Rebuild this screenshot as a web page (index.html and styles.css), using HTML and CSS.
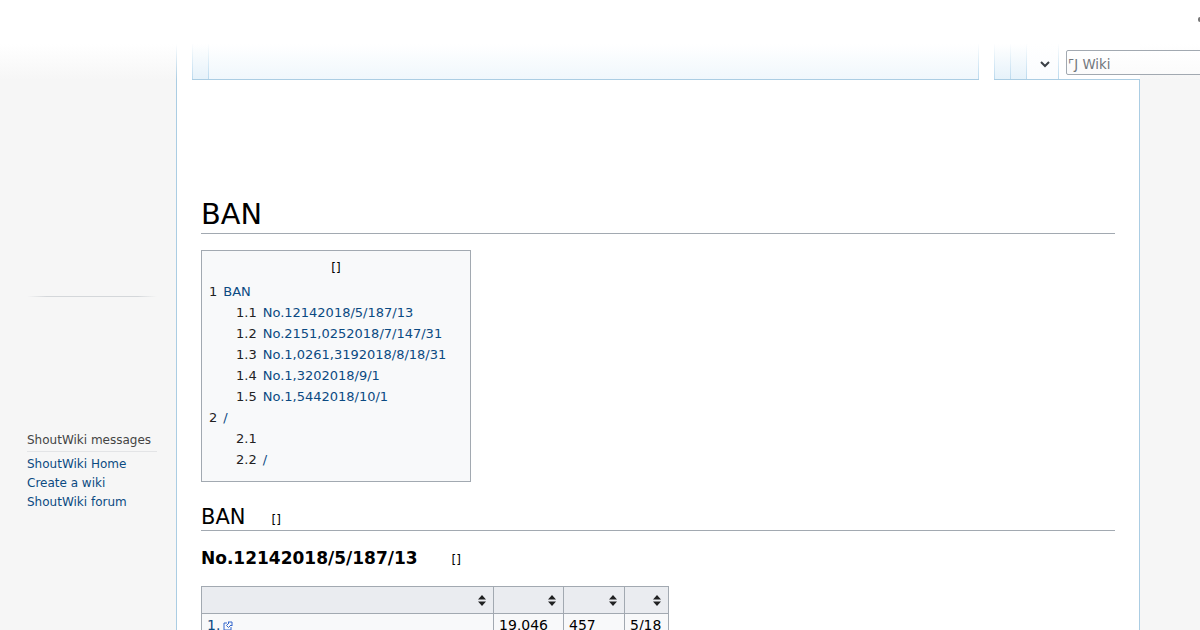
FILE: index.html
```html
<!DOCTYPE html>
<html lang="en">
<head>
<meta charset="utf-8">
<title>BAN</title>
<link rel="stylesheet" href="styles.css">
</head>
<body>
<div class="page">
  <span class="corner-mark"></span>
  <aside class="sidebar">
    <div class="side-rule"></div>
    <div class="portal">
      <h3 class="portal-title">ShoutWiki messages</h3>
      <ul class="portal-list">
        <li><a href="#">ShoutWiki Home</a></li>
        <li><a href="#">Create a wiki</a></li>
        <li><a href="#">ShoutWiki forum</a></li>
      </ul>
    </div>
  </aside>
  <div class="main">
    <header class="head">
      <div class="tabs tabs-left"><span class="tab tab-narrow"></span><span class="tab tab-fill"></span></div>
      <div class="tabs tabs-right">
        <span class="tab tab-s"></span><span class="tab tab-s"></span>
        <span class="tab tab-more">
          <svg width="10" height="7" viewBox="0 0 10 7"><path d="M1 1l4 4 4-4" fill="none" stroke="#3a3f45" stroke-width="2"/></svg>
        </span>
      </div>
      <div class="head-end"><div class="search"><span class="search-ph">⌜J Wiki</span></div></div>
    </header>
    <main class="content">
      <h1 class="title">BAN</h1>
      <div class="toc">
        <div class="toc-title">[]</div>
        <ul class="toc-list">
          <li><span class="num">1</span><a href="#">BAN</a></li>
          <li class="sub"><span class="num">1.1</span><a href="#">No.12142018/5/187/13</a></li>
          <li class="sub"><span class="num">1.2</span><a href="#">No.2151,0252018/7/147/31</a></li>
          <li class="sub"><span class="num">1.3</span><a href="#">No.1,0261,3192018/8/18/31</a></li>
          <li class="sub"><span class="num">1.4</span><a href="#">No.1,3202018/9/1</a></li>
          <li class="sub"><span class="num">1.5</span><a href="#">No.1,5442018/10/1</a></li>
          <li><span class="num">2</span><a href="#">/</a></li>
          <li class="sub"><span class="num">2.1</span></li>
          <li class="sub"><span class="num">2.2</span><a href="#">/</a></li>
        </ul>
      </div>
      <h2 class="h2">BAN<span class="edit">[]</span></h2>
      <h3 class="h3">No.12142018/5/187/13<span class="edit edit-h3">[]</span></h3>
      <table class="data">
        <thead>
          <tr><th class="c1"></th><th class="c2"></th><th class="c3"></th><th class="c4"></th></tr>
        </thead>
        <tbody>
          <tr>
            <td><a href="#">1.</a><svg class="ext" width="10" height="10" viewBox="0 0 10 10"><path d="M4 2H1v7h7V6" fill="none" stroke="#36c" stroke-width="1"/><path d="M5 1h4v4L8 4 5.500 6.500 3.500 4.500 6 2z" fill="none" stroke="#36c" stroke-width="1"/></svg></td>
            <td>19,046</td><td>457</td><td>5/18</td>
          </tr>
        </tbody>
      </table>
    </main>
  </div>
</div>
</body>
</html>
```
FILE: styles.css
```css
* { box-sizing: border-box; }
html, body { margin: 0; height: 630px; overflow: hidden; }
body {
  font-family: "DejaVu Sans", sans-serif;
  background: #f6f6f6;
  color: #000;
}
a { color: #0b4a82; text-decoration: none; }
.page {
  display: flex;
  position: relative;
  height: 630px;
  background: linear-gradient(#fff 44px, #f6f6f6 80px);
}
.corner-mark {
  position: absolute;
  left: 1198px;
  top: 17px;
  width: 2px;
  height: 5px;
  background: #777;
  border-radius: 2px 0 0 2px;
}
.sidebar { width: 176px; flex: none; padding: 296px 19px 0 27px; }
.side-rule {
  height: 1px;
  background: linear-gradient(90deg, rgba(200,204,209,0), #d4d7da 15%, #d4d7da 85%, rgba(200,204,209,0));
}
.portal { margin-top: 135px; }
.portal-title {
  margin: 0;
  font-size: 12px;
  font-weight: 400;
  line-height: 16px;
  color: #444;
  height: 20px;
  border-bottom: 1px solid #e3e4e6;
}
.portal-list { list-style: none; margin: 3px 0 0; padding: 0; }
.portal-list li { font-size: 12px; line-height: 19px; }
.main { width: 964px; flex: none; }
.head {
  height: 80px;
  padding-top: 44px;
  display: flex;
  background: linear-gradient(#fff, #fff) 0 44px / 100% 36px no-repeat;
  position: relative;
}
.head::before {
  content: "";
  position: absolute;
  left: 0;
  top: 44px;
  width: 1px;
  height: 36px;
  background: linear-gradient(#fff, #abcde3);
}
.tabs {
  height: 36px;
  flex: none;
  display: flex;
  border-bottom: 1px solid #abcde3;
}
.tabs-left {
  width: 787px;
  margin-left: 16px;
  background: linear-gradient(#fff, #f0f7fc);
}
.tabs-right {
  width: 65px;
  margin-left: 15px;
  background: linear-gradient(#fff, #e6f2fa);
}
.tab {
  display: block;
  border-left: 1px solid;
  border-image: linear-gradient(#fff, #b9d9ee) 1;
}
.tab-narrow { width: 16px; background: linear-gradient(#fff, #e6f2fa); }
.tab-fill { flex: 1; border-right: 1px solid; }
.tab-s { width: 16px; }
.tab-more {
  flex: 1;
  border-right: 1px solid;
  display: flex;
  align-items: center;
  justify-content: center;
  padding: 6px 0 0 5px;
  background: linear-gradient(#fff, #fafcfe);
}
.head-end {
  width: 81px;
  height: 36px;
  flex: none;
  border-bottom: 1px solid #abcde3;
  padding: 6px 0 0 7px;
}
.search {
  width: 150px;
  height: 25px;
  border: 1px solid #a2a9b1;
  border-radius: 2px;
  background: linear-gradient(#fff, #fbfbfb);
  font-size: 13.3px;
  line-height: 27px;
  color: #72777d;
  padding-left: 1px;
  white-space: nowrap;
  overflow: hidden;
}
.content {
  height: 550px;
  overflow: hidden;
  background: #fff;
  border: 1px solid #abcde3;
  border-width: 0 1px;
  padding: 116px 24px 0;
}
.title {
  margin: 0;
  font-size: 28.8px;
  font-weight: 400;
  line-height: 37px;
  height: 38px;
  border-bottom: 1px solid #a2a9b1;
}
.toc {
  width: 270px;
  margin-top: 16px;
  height: 232px;
  background: #f8f9fa;
  border: 1px solid #a2a9b1;
  padding: 8px 7px 7px;
  font-size: 13px;
}
.toc-title { text-align: center; font-size: 12px; line-height: 18px; }
.toc-list { list-style: none; margin: 4px 0 0; padding: 0; }
.toc-list li { line-height: 21px; height: 21px; white-space: nowrap; }
.toc-list .sub { padding-left: 27px; }
.num { margin-right: 6px; color: #222; }
.h2 {
  margin: 20px 0 0;
  font-size: 21px;
  font-weight: 400;
  line-height: 30px;
  border-bottom: 1px solid #a2a9b1;
  height: 29px;
}
.edit { font-size: 12px; margin-left: 26px; }
.h3 { margin: 14px 0 0; font-size: 17px; font-weight: 700; line-height: 26px; }
.edit-h3 { font-weight: 400; margin-left: 34px; }
.data {
  margin-top: 13px;
  border-collapse: collapse;
  background: #f8f9fa;
  font-size: 14px;
  table-layout: fixed;
  width: 467px;
}
.data th, .data td { border: 1px solid #a2a9b1; padding: 3px 5px; height: 27px; vertical-align: top; }
.data th {
  background-color: #eaecf0;
  background-image: url("data:image/svg+xml,%3Csvg xmlns='http://www.w3.org/2000/svg' width='8' height='11'%3E%3Cpath d='M4 0l4 4.500H0zM4 11L0 6.500h8z' fill='%23202122'/%3E%3C/svg%3E");
  background-repeat: no-repeat;
  background-position: right 7px center;
}
.c1 { width: 292px; }
.c2 { width: 70px; }
.c3 { width: 61px; }
.c4 { width: 44px; }
.ext { margin-left: 3px; vertical-align: -1px; }
```
